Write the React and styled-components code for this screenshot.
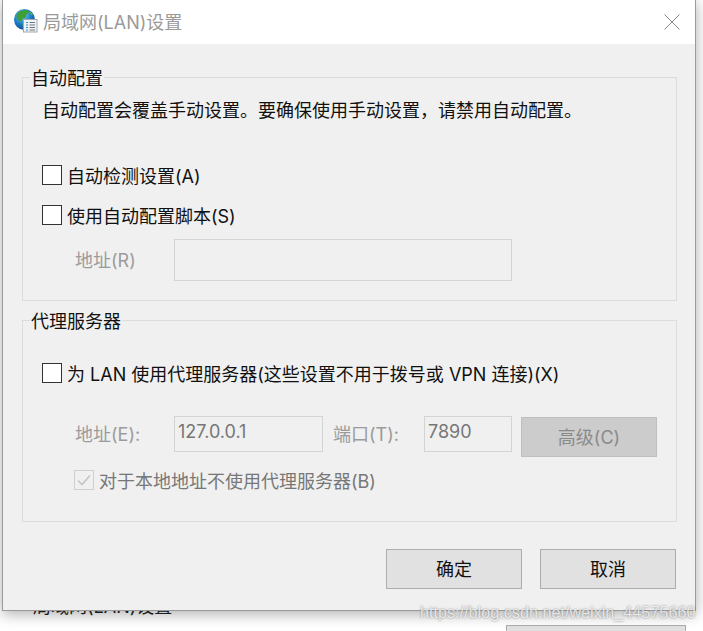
import React from "react";
import styled, { createGlobalStyle } from "styled-components";

const Global = createGlobalStyle`
  html, body { margin: 0; padding: 0; background: #fff; }
  * { box-sizing: border-box; }
`;
const FONT = `"Inter", "Noto Sans CJK SC", sans-serif`;

const Page = styled.div`
  position: relative;
  width: 703px;
  height: 631px;
  overflow: hidden;
  background: #fff;
  font-family: ${FONT};
  font-size: 18px;
  color: #111;
`;
const Behind = styled.div`
  display: flex;
  justify-content: space-between;
  padding: 596px 17px 0 33px;
`;
const BehindLabel = styled.span`
  font-size: 18px;
  line-height: 22px;
  color: #222;
`;
const BehindButton = styled.div`
  width: 180px;
  height: 30px;
  margin-top: 29px;
  background: #e1e1e1;
  border: 1px solid #adadad;
`;
const Dialog = styled.div`
  position: absolute;
  left: 2px;
  top: -1px;
  width: 694px;
  height: 612px;
  display: flex;
  flex-direction: column;
  background: #f0f0f0;
  border: 1px solid #9a9a9a;
  box-shadow: 0 3px 14px rgba(0, 0, 0, 0.32);
`;
const TitleBar = styled.div`
  height: 44px;
  flex: none;
  display: flex;
  align-items: center;
  padding: 0 15px 0 11px;
  background: #fff;
`;
const Title = styled.div`
  flex: 1;
  margin: -2px 0 0 5px;
  font-size: 18px;
  color: #9a9a9a;
`;
const IconSlot = styled.span`
  display: flex;
  margin-top: -2px;
`;
const Body = styled.div`
  flex: 1;
  display: flex;
  flex-direction: column;
  padding: 20px 18px 0 19px;
`;
const Group = styled.fieldset`
  margin: 0 0 ${(p) => p.$after}px;
  padding: 0 0 0 19px;
  height: ${(p) => p.$height}px;
  border: 1px solid #dcdcdc;
  min-width: 0;
`;
const Legend = styled.legend`
  margin-left: -12px;
  padding: 4px 1px 0;
  font-size: 18px;
  line-height: 22px;
  color: #111;
`;
const Note = styled.div`
  line-height: 22px;
  margin-top: 10px;
`;
const CheckRow = styled.label`
  display: flex;
  align-items: center;
  gap: 5px;
  height: 22px;
  margin-top: ${(p) => p.$top}px;
  padding-left: ${(p) => p.$left || 0}px;
  color: ${(p) => (p.$dim ? "#777" : "#111")};
`;
const Box = styled.span`
  width: 20px;
  height: 20px;
  flex: none;
  display: flex;
  align-items: center;
  justify-content: center;
  background: ${(p) => (p.$dim ? "#f0f0f0" : "#fff")};
  border: 1px solid ${(p) => (p.$dim ? "#cfcfcf" : "#333")};
`;
const FieldRow = styled.div`
  display: flex;
  align-items: ${(p) => p.$align || "center"};
  margin-top: ${(p) => p.$top}px;
  padding-left: ${(p) => p.$left || 0}px;
`;
const FieldLabel = styled.span`
  width: ${(p) => p.$width}px;
  flex: none;
  padding-left: ${(p) => p.$pad || 0}px;
  color: #9b9b9b;
  line-height: 22px;
  margin-top: ${(p) => p.$drop || 0}px;
`;
const Input = styled.div`
  width: ${(p) => p.$width}px;
  height: 36px;
  flex: none;
  padding: 3px 3px 0;
  line-height: 24px;
  font-size: 18px;
  color: #777;
  background: #f0f0f0;
  border: 1px solid #d4d4d4;
`;
const TallInput = styled(Input)`
  height: 42px;
`;
const Advanced = styled.div`
  width: 136px;
  height: 40px;
  margin: 1px 0 0 9px;
  padding-bottom: 2px;
  display: flex;
  align-items: center;
  justify-content: center;
  color: #8a8a8a;
  background: #cccccc;
  border: 1px solid #bfbfbf;
`;
const Footer = styled.div`
  display: flex;
  justify-content: flex-end;
  gap: 18px;
  margin-top: 27px;
  padding-right: 1px;
`;
const Button = styled.div`
  width: 136px;
  height: 40px;
  padding-bottom: 2px;
  display: flex;
  align-items: center;
  justify-content: center;
  color: #111;
  background: #e1e1e1;
  border: 1px solid #adadad;
`;
const Watermark = styled.div`
  position: absolute;
  left: 420px;
  top: 602px;
  font-family: "Liberation Sans", sans-serif;
  font-size: 16.2px;
  line-height: 20px;
  color: rgba(255, 255, 255, 0.75);
  text-shadow: 0 0 2px rgba(90, 90, 90, 0.75);
  white-space: nowrap;
`;

const Globe = () => (
  <svg width="24" height="24" viewBox="0 0 24 24">
    <defs>
      <radialGradient id="g" cx="0.4" cy="0.3" r="0.8">
        <stop offset="0" stopColor="#6fd0f2" />
        <stop offset="0.55" stopColor="#1a78c4" />
        <stop offset="1" stopColor="#0f3f86" />
      </radialGradient>
    </defs>
    <circle cx="10.500" cy="10.500" r="10.500" fill="url(#g)" />
    <path d="M5.500 2.500c3-2 7-2 9-.8 1 1.800-1.500 2.800-2.500 4.300 1 1.500-1 3-3 3.500-2 1-1 3.500-2.500 3-1.500-1-4-2.500-4-5 0-2 1.200-3.800 3-5z" fill="#3f9e35" />
    <path d="M9 13c2-1 2.500-.5 3 1 0 2-1 4-2 5-1.500-1-1.800-4-1-6z" fill="#4fa83a" />
    <path d="M15.500 3c1.500 0 3 1.500 3.500 3-1 .5-2.500 0-3.500-3z" fill="#63b548" />
    <rect x="9.500" y="10.500" width="13.500" height="12.500" fill="#f1f3f5" stroke="#a3a9ae" />
    <path d="M15.500 13.500h5.500M15.500 16h5.500M15.500 18.500h5.500M15.500 21h5.500" stroke="#6d7880" strokeWidth="1" />
    <path d="M12 13.500h2M12 16h2M12 18.500h2M12 21h2" stroke="#2a8fd0" strokeWidth="1" />
  </svg>
);

const Close = () => (
  <svg width="16" height="16" viewBox="0 0 16 16">
    <path d="M.5.5l15 15M15.500.5l-15 15" stroke="#8a8a8a" strokeWidth="1" fill="none" />
  </svg>
);

const Tick = () => (
  <svg width="14" height="12" viewBox="0 0 14 12">
    <path d="M1 6.500l4 4L13 1.500" stroke="#c4c4c4" strokeWidth="1.600" fill="none" />
  </svg>
);

export default function App() {
  return (
    <Page>
      <Global />
      <Behind>
        <BehindLabel>局域网(LAN)设置</BehindLabel>
        <BehindButton />
      </Behind>
      <Dialog>
        <TitleBar>
          <IconSlot><Globe /></IconSlot>
          <Title>局域网(LAN)设置</Title>
          <Close />
        </TitleBar>
        <Body>
          <Group $height={237} $after={6}>
            <Legend>自动配置</Legend>
            <Note>自动配置会覆盖手动设置。要确保使用手动设置，请禁用自动配置。</Note>
            <CheckRow $top={42}><Box />自动检测设置(A)</CheckRow>
            <CheckRow $top={18}><Box />使用自动配置脚本(S)</CheckRow>
            <FieldRow $top={13} $left={33}>
              <FieldLabel $width={99} $drop={2}>地址(R)</FieldLabel>
              <TallInput $width={338} />
            </FieldRow>
          </Group>
          <Group $height={215} $after={0}>
            <Legend>代理服务器</Legend>
            <CheckRow $top={29}><Box />为 LAN 使用代理服务器(这些设置不用于拨号或 VPN 连接)(X)</CheckRow>
            <FieldRow $top={32} $left={33} $align="flex-start">
              <FieldLabel $width={99} $drop={8}>地址(E):</FieldLabel>
              <Input $width={149}>127.0.0.1</Input>
              <FieldLabel $width={101} $pad={10} $drop={8}>端口(T):</FieldLabel>
              <Input $width={88}>7890</Input>
              <Advanced>高级(C)</Advanced>
            </FieldRow>
            <CheckRow $top={12} $dim $left={32}><Box $dim><Tick /></Box>对于本地地址不使用代理服务器(B)</CheckRow>
          </Group>
          <Footer>
            <Button>确定</Button>
            <Button>取消</Button>
          </Footer>
        </Body>
      </Dialog>
      <Watermark>https://blog.csdn.net/weixin_44575660</Watermark>
    </Page>
  );
}
